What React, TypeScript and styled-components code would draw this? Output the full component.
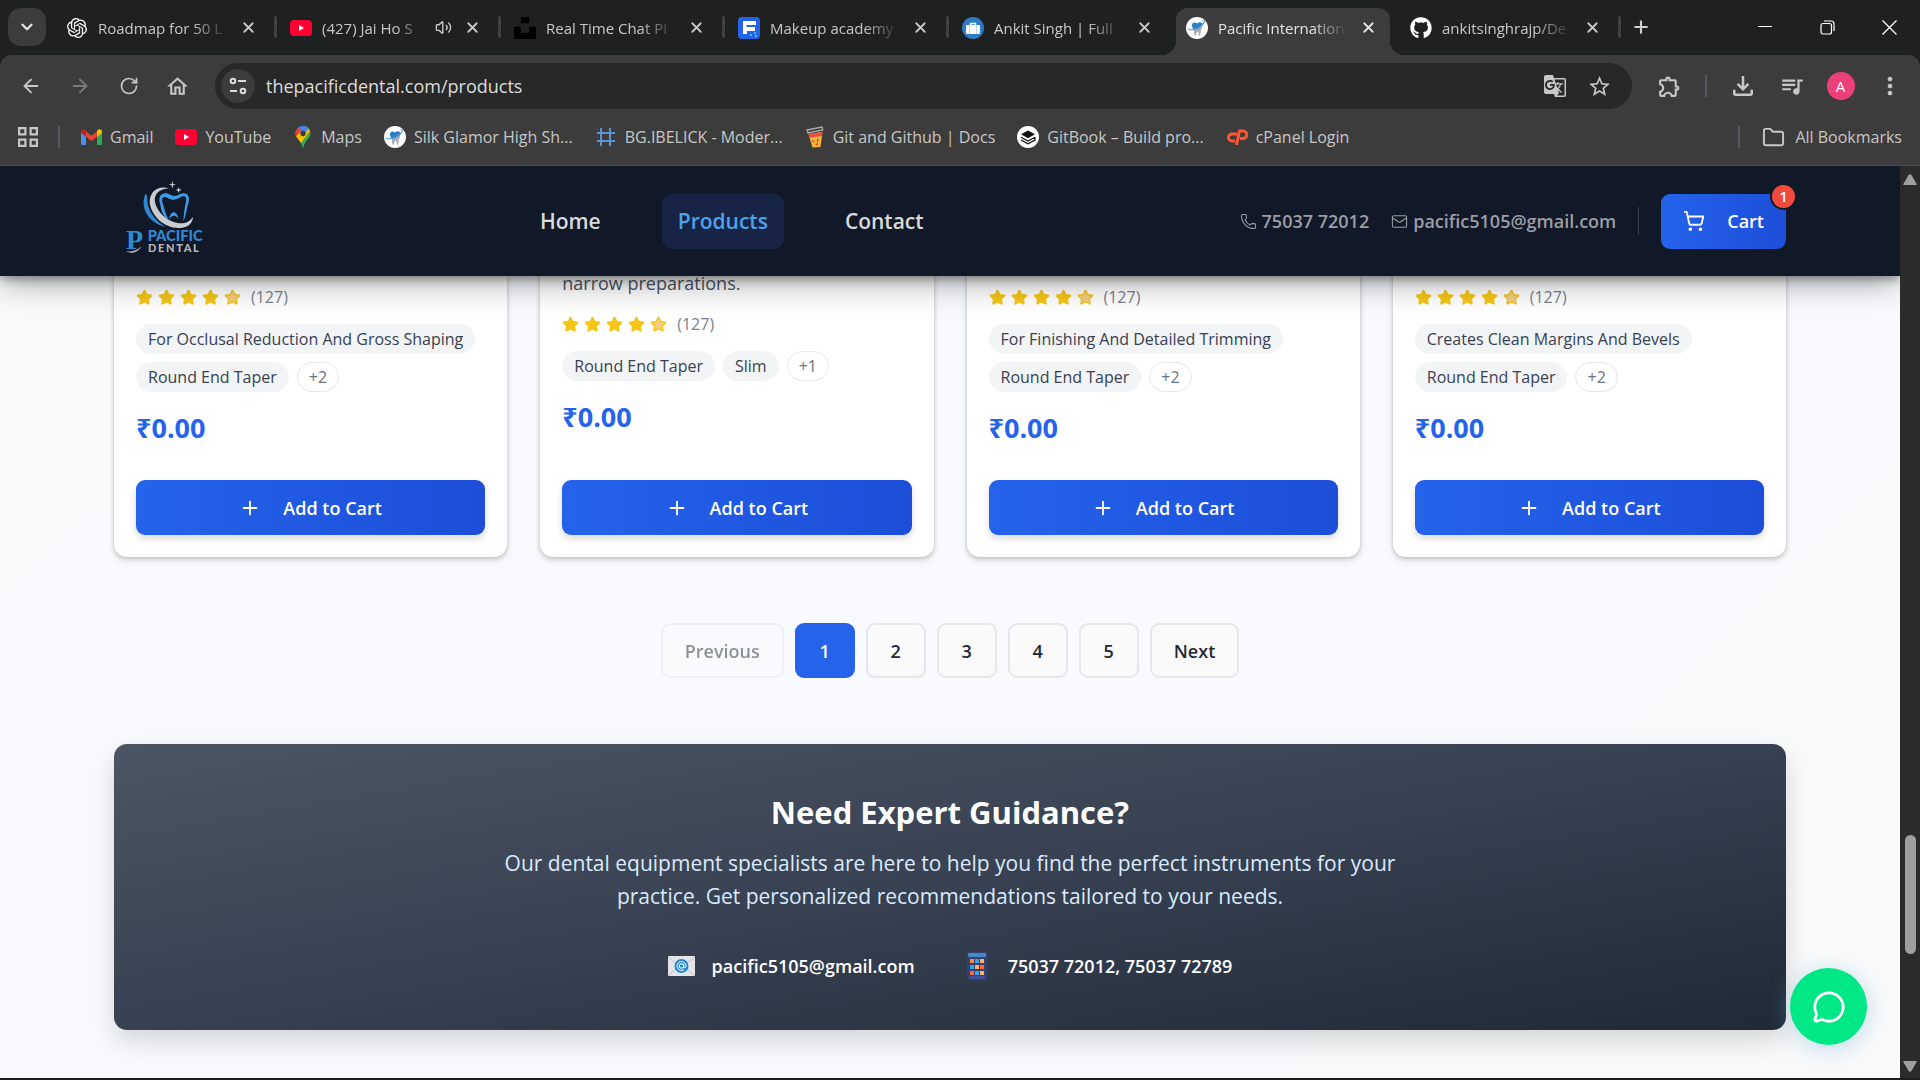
import React from "react";
import styled, { createGlobalStyle, css } from "styled-components";
import {
  ArrowLeft,
  ArrowRight,
  ChevronDown,
  Folder,
  Mail,
  MessageCircle,
  Phone,
  Plus,
  RotateCw,
  ShoppingCart,
  Star,
  Volume2,
  X,
} from "lucide-react";
import { FaGithub } from "react-icons/fa";
import { SiOpenai, SiUnsplash } from "react-icons/si";
import {
  MdGTranslate,
  MdMoreVert,
  MdOutlineExtension,
  MdOutlineFileDownload,
  MdOutlineHome,
  MdQueueMusic,
  MdStarOutline,
} from "react-icons/md";

const GlobalStyle = createGlobalStyle`
  *, *::before, *::after { box-sizing: border-box; }
  body {
    margin: 0;
    background: #1f2120;
    font-family: "Open Sans", "Noto Sans", sans-serif;
    overflow: hidden;
  }
  button, input { font: inherit; color: inherit; }
  button { border: 0; padding: 0; background: none; cursor: pointer; }
  a { color: inherit; text-decoration: none; }
  svg { display: block; flex-shrink: 0; }
`;

/* ---------- Browser frame ---------- */

const Browser = styled.div`
  height: 100vh;
  display: flex;
  flex-direction: column;
`;

const TabStrip = styled.div`
  height: 55px;
  display: flex;
  align-items: flex-start;
  padding: 8px 0 0 8px;
  background: #1f2120;
  color: #c7c7c7;
`;

const TabSearch = styled.button`
  display: grid;
  place-items: center;
  width: 38px;
  height: 38px;
  margin-right: 10px;
  border-radius: 13px;
  background: #3c3c3c;
  color: #e3e3e3;
`;

const Tab = styled.div<{ $active?: boolean }>`
  position: relative;
  flex: 0 1 214px;
  min-width: 0;
  height: 47px;
  padding: 0 12px 8px 10px;
  display: flex;
  align-items: center;
  gap: 10px;
  border-radius: 12px 12px 0 0;
  ${(p) =>
    p.$active &&
    css`
      background: #3c3c3c;
      color: #e3e3e3;
      &::before,
      &::after {
        content: "";
        position: absolute;
        bottom: 0;
        width: 14px;
        height: 14px;
      }
      &::before {
        right: 100%;
        background: radial-gradient(circle at 0 0, transparent 14px, #3c3c3c 14px);
      }
      &::after {
        left: 100%;
        background: radial-gradient(circle at 100% 0, transparent 14px, #3c3c3c 14px);
      }
    `}
`;

const TabTitle = styled.button`
  flex: 1;
  min-width: 0;
  overflow: hidden;
  white-space: nowrap;
  text-align: left;
  font-size: 15px;
  line-height: 24px;
  mask-image: linear-gradient(to right, #000 72%, transparent);
`;

const TabIcon = styled.span`
  display: grid;
  place-items: center;
  width: 22px;
  height: 22px;
`;

const CloseTab = styled.button`
  display: grid;
  place-items: center;
  width: 20px;
  height: 20px;
`;

const TabGap = styled.span<{ $line: boolean }>`
  display: flex;
  justify-content: center;
  width: 10px;
  height: 38px;
  align-items: center;
  &::before {
    content: "";
    width: 3px;
    height: 22px;
    border-radius: 2px;
    background: ${(p) => (p.$line ? "#3f4040" : "transparent")};
  }
`;

const NewTab = styled.button`
  display: grid;
  place-items: center;
  width: 34px;
  height: 38px;
  color: #d0d0d0;
`;

const WindowControls = styled.div`
  margin-left: auto;
  display: flex;
  height: 38px;
  color: #fff;
`;

const WindowButton = styled.button`
  display: grid;
  place-items: center;
  width: 62px;
`;

const Toolbar = styled.div`
  background: #3c3c3c;
  color: #c7c7c7;
  border-radius: 12px 12px 0 0;
  border-bottom: 1px solid #4a4c50;
`;

const AddressRow = styled.div`
  height: 62px;
  padding: 8px 6px;
  display: flex;
  align-items: center;
`;

const ToolButton = styled.button<{ $dim?: boolean }>`
  display: grid;
  place-items: center;
  width: 49px;
  height: 46px;
  opacity: ${(p) => (p.$dim ? 0.45 : 1)};
`;

const Omnibox = styled.div`
  flex: 1;
  height: 46px;
  margin: 0 13px 0 13px;
  padding: 0 11px 0 6px;
  display: flex;
  align-items: center;
  border-radius: 23px;
  background: #282828;
`;

const SiteInfo = styled.button`
  display: grid;
  place-items: center;
  width: 34px;
  height: 34px;
  margin-right: 11px;
  border-radius: 50%;
  background: #3c3c3c;
`;

const UrlInput = styled.input`
  flex: 1;
  min-width: 0;
  padding: 0;
  border: 0;
  outline: 0;
  background: none;
  color: #dcdcdc;
  font-size: 18px;
`;

const OmniAction = styled.button`
  display: grid;
  place-items: center;
  width: 44px;
  height: 40px;
`;

const ThinLine = styled.span<{ $spaced?: boolean }>`
  width: 2px;
  height: 22px;
  margin: 0 ${(p) => (p.$spaced ? 11 : 0)}px;
  background: #535a66;
`;

const Avatar = styled.span`
  display: grid;
  place-items: center;
  width: 28px;
  height: 28px;
  border-radius: 50%;
  background: #ec407a;
  color: #fff;
  font-size: 15px;
`;

const BookmarkRow = styled.nav`
  height: 48px;
  padding: 0 18px 8px;
  display: flex;
  align-items: center;
  font-size: 16px;
  line-height: 24px;
`;

const AppsButton = styled.button`
  margin-right: 20px;
`;

const BookmarkList = styled.div`
  display: flex;
  gap: 22px;
  margin-left: 21px;
`;

const Bookmark = styled.a`
  display: flex;
  align-items: center;
  gap: 8px;
  white-space: nowrap;
`;

const BookmarkEnd = styled.div`
  margin-left: auto;
  display: flex;
  align-items: center;
  gap: 22px;
`;

const FolderButton = styled.button`
  display: flex;
  align-items: center;
  gap: 10px;
`;

const Round = styled.span<{ $size: number; $color: string }>`
  display: grid;
  place-items: center;
  flex-shrink: 0;
  width: ${(p) => p.$size}px;
  height: ${(p) => p.$size}px;
  border-radius: 50%;
  background: ${(p) => p.$color};
`;

const Viewport = styled.div`
  flex: 1;
  min-height: 0;
  display: flex;
  border-bottom: 2px solid #1f1b1f;
`;

const Scrollbar = styled.div`
  width: 20px;
  padding: 8px 0 6px;
  display: flex;
  flex-direction: column;
  align-items: center;
  background: #2b2b2b;
`;

const ScrollTrack = styled.div`
  flex: 1;
  width: 11px;
  display: flex;
  flex-direction: column;
`;

const ScrollSpace = styled.span<{ $share: number }>`
  flex: ${(p) => p.$share};
`;

const ScrollThumb = styled.span`
  flex: 119;
  border-radius: 6px;
  background: #9f9f9f;
`;

/* ---------- Site ---------- */

const Site = styled.div`
  position: relative;
  flex: 1;
  min-width: 0;
  overflow: hidden;
  background: linear-gradient(135deg, #f8fafc, #f8faff 60%, #fafafa);
`;

const Header = styled.header`
  position: relative;
  z-index: 2;
  height: 110px;
  padding: 0 6%;
  display: flex;
  align-items: center;
  justify-content: space-between;
  background: #111827;
  box-shadow: 0 4px 33px rgba(0, 0, 0, 0.4), 0 2px 10px rgba(0, 0, 0, 0.4);
`;

const Nav = styled.nav`
  display: flex;
  gap: 45px;
`;

const NavLink = styled.a<{ $active?: boolean }>`
  padding: 0 16px;
  border-radius: 11px;
  font-size: 21px;
  font-weight: 600;
  line-height: 55px;
  color: ${(p) => (p.$active ? "#4ba3ea" : "#d9dadc")};
  background: ${(p) => (p.$active ? "#172445" : "transparent")};
`;

const HeaderSide = styled.div`
  display: flex;
  align-items: center;
  gap: 22px;
`;

const HeaderContact = styled.a`
  display: flex;
  align-items: center;
  gap: 5px;
  font-size: 18px;
  font-weight: 600;
  color: #9b9ea4;
`;

const HeaderLine = styled.span`
  width: 1px;
  height: 28px;
  background: #374151;
`;

const CartButton = styled.button`
  position: relative;
  display: flex;
  align-items: center;
  gap: 22px;
  height: 55px;
  padding: 0 22px;
  border-radius: 9px;
  background: linear-gradient(90deg, #2563eb, #1d4ed8);
  color: #fff;
  font-size: 18px;
  font-weight: 600;
`;

const CartBadge = styled.span`
  position: absolute;
  top: -11px;
  right: -11px;
  display: grid;
  place-items: center;
  width: 27px;
  height: 27px;
  border: 2px solid #111827;
  border-radius: 50%;
  background: #f04a3c;
  font-size: 15px;
`;

const Content = styled.main`
  padding: 0 6%;
`;

const CardGrid = styled.section`
  display: grid;
  grid-template-columns: repeat(4, minmax(0, 1fr));
  gap: 33px;
  margin-top: -33px;
`;

const Card = styled.article`
  display: flex;
  flex-direction: column;
  padding: 27px 22px 22px;
  height: 314px;
  border-radius: 13px;
  background: #fff;
  box-shadow: 0 4px 7px rgba(0, 0, 0, 0.1), 0 1px 4px rgba(0, 0, 0, 0.2);
`;

const Description = styled.p`
  margin: 0;
  font-size: 18px;
  line-height: 27px;
  color: #4b5563;
`;

const Rating = styled.div`
  display: flex;
  align-items: center;
  gap: 5px;
  height: 24px;
  margin: 15px 0;
`;

const ReviewCount = styled.span`
  margin-left: 5px;
  font-size: 16px;
  color: #7b828e;
`;

const Tags = styled.div`
  display: flex;
  flex-wrap: wrap;
  gap: 8px;
`;

const Tag = styled.span<{ $more?: boolean }>`
  height: 30px;
  padding: 0 11px;
  border: 1px solid ${(p) => (p.$more ? "#e5e7eb" : "#f3f4f6")};
  border-radius: 15px;
  background: ${(p) => (p.$more ? "#fff" : "#f3f4f6")};
  color: ${(p) => (p.$more ? "#6b7280" : "#374151")};
  font-size: 16px;
  font-weight: 500;
  line-height: 28px;
  white-space: nowrap;
`;

const Price = styled.strong`
  margin-top: 16px;
  color: #2563eb;
  font-size: 27px;
  font-weight: 700;
  line-height: 40px;
`;

const AddButton = styled.button`
  display: flex;
  align-items: center;
  justify-content: center;
  gap: 22px;
  height: 55px;
  margin-top: auto;
  border-radius: 9px;
  background: linear-gradient(90deg, #2563eb, #1d4ed8);
  box-shadow: 0 4px 7px rgba(0, 0, 0, 0.14);
  color: #fff;
  font-size: 18px;
  font-weight: 600;
`;

const Pagination = styled.nav`
  display: flex;
  justify-content: center;
  gap: 11px;
  margin: 66px 0;
`;

const PageButton = styled.button<{ $active?: boolean }>`
  height: 55px;
  min-width: 60px;
  padding: 0 22px;
  border: 2px solid ${(p) => (p.$active ? "#2563eb" : "#e5e7eb")};
  border-radius: 9px;
  background: ${(p) => (p.$active ? "#2563eb" : "#fafafa")};
  color: ${(p) => (p.$active ? "#fff" : "#1f2937")};
  font-size: 18px;
  font-weight: 600;
  &:disabled {
    opacity: 0.5;
  }
`;

const Guidance = styled.section`
  padding: 44px;
  border-radius: 13px;
  background: linear-gradient(to bottom right, #4b5563, #374151 50%, #1f2937);
  box-shadow: 0 11px 27px rgba(0, 0, 0, 0.15);
  text-align: center;
  color: #fff;
`;

const GuidanceTitle = styled.h2`
  margin: 0 0 11px;
  font-size: 31px;
  font-weight: 700;
  line-height: 48px;
`;

const GuidanceText = styled.p`
  max-width: 900px;
  margin: 0 auto 33px;
  font-size: 21px;
  line-height: 33px;
  color: #dbeafe;
`;

const GuidanceContacts = styled.div`
  display: flex;
  justify-content: center;
  gap: 49px;
`;

const GuidanceLink = styled.a`
  display: flex;
  align-items: center;
  gap: 17px;
  height: 40px;
  font-size: 18px;
  font-weight: 600;
`;

const EmojiBox = styled.span`
  display: grid;
  place-items: center;
  width: 27px;
`;

const ChatButton = styled.button`
  position: absolute;
  right: 33px;
  bottom: 33px;
  z-index: 3;
  display: grid;
  place-items: center;
  width: 77px;
  height: 77px;
  border-radius: 50%;
  background: #00e785;
  color: #fff;
  box-shadow: 0 4px 24px rgba(120, 180, 220, 0.45);
`;

/* ---------- Drawings ---------- */

const YoutubeIcon = () => (
  <svg width="22" height="16" viewBox="0 0 22 16">
    <rect width="22" height="16" rx="4" fill="#ff0033" />
    <path d="M9 5v6l5-3z" fill="#fff" />
  </svg>
);

const GmailIcon = () => (
  <svg width="21" height="16" viewBox="0 0 21 16">
    <path d="M0 3v11.500a1.500 1.500 0 0 0 1.500 1.500H5V6z" fill="#4a90f0" />
    <path d="M21 3v11.500a1.500 1.500 0 0 1-1.500 1.500H16V6z" fill="#34a853" />
    <path d="M5 2.500l5.500 4.200L16 2.500v5.300L10.500 12 5 7.800z" fill="#ea4335" />
    <path d="M0 2.500C0 .3 2.300-.6 4 .8l1 .9v6.100L0 4z" fill="#c5221f" />
    <path d="M21 2.500C21 .3 18.700-.6 17 .8l-1 .9v6.100L21 4z" fill="#fbbc04" />
  </svg>
);

const MapsIcon = () => (
  <svg width="20" height="22" viewBox="1 0 20 22">
    <clipPath id="pin">
      <path d="M11 0a7.500 7.500 0 0 1 7.500 7.500c0 5-5.500 6.500-6.800 13.500q-.7 1.500-1.400 0C9 14 3.500 12.500 3.500 7.500A7.500 7.500 0 0 1 11 0z" />
    </clipPath>
    <g clipPath="url(#pin)">
      <path d="M0 0h22v22H0z" fill="#34a853" />
      <path d="M0 0h16L3 15H0z" fill="#1a73e8" />
      <path d="M0 0h6l5 7-8 5z" fill="#ea4335" />
      <path d="M2 13L13.500 0H22L9 17z" fill="#fbbc04" />
      <path d="M5 0h14l-7 8z" fill="#4285f4" />
    </g>
    <circle cx="11" cy="7.500" r="2.700" fill="#3c3c3c" />
  </svg>
);

const ToothIcon = () => (
  <Round $size={22} $color="#fff">
    <svg width="20" height="20" viewBox="0 0 20 20">
      <path d="M6 8h9c0 2.500-1 3.500-1.200 5-.2 2-.5 5-1.300 5s-.8-4.500-2-4.500S9.300 18 8.300 18 7 14.500 6.800 12.500 6 9.500 6 8z" fill="#a9adb2" />
      <path d="M5 8c-.5-3.500 2.500-4.500 5-2.500C12 3.500 16 4 15.500 7.500L13 9.500l-4 2-3-.5z" fill="#2b7fc7" />
      <path d="M1 10.500c.5 2.500 9 1 13-2.500s4.500-5.500 1.500-5.500" fill="none" stroke="#4b9bd8" strokeWidth="1.200" />
    </svg>
  </Round>
);

const FramerIcon = () => (
  <svg width="22" height="22" viewBox="0 0 22 22">
    <rect width="22" height="22" rx="4" fill="#2563eb" />
    <path d="M5 4h13v4H8.500v2H17v4H9v3H5z" fill="#fff" />
    <path d="M12 17h2v2h-2zM16 15h2v2h-2zM17 18h2v2h-2z" fill="#38bdf8" />
  </svg>
);

const BagIcon = () => (
  <Round $size={22} $color="#2d7bc4">
    <svg width="14" height="14" viewBox="0 0 14 14">
      <path d="M4.500 4V2.500h5V4" fill="none" stroke="#fff" strokeWidth="1.400" />
      <rect x="0" y="4" width="14" height="9" rx="1" fill="#fff" />
      <path d="M3.500 4v9M10.500 4v9" stroke="#9cc6ea" strokeWidth=".7" />
    </svg>
  </Round>
);

const HashIcon = () => (
  <svg width="22" height="18" viewBox="0 0 22 18" stroke="#5b95d6" strokeWidth="2" fill="none">
    <path d="M6 0v18M15 0v18M2 5h18M2 13h18" />
  </svg>
);

const CupIcon = () => (
  <svg width="20" height="22" viewBox="0 0 20 22">
    <path d="M2 4l15-3 .8 3L3 7z" fill="none" stroke="#a9a9a9" strokeWidth="1.300" />
    <path d="M3.500 8l14-2-2 15-8 .5z" fill="#f6b73c" />
    <path d="M3.500 8l14-2-.5 4-12.500 1.500z" fill="#ef4b3f" />
    <path d="M7 14l3 1-2 2zM12 12l2 2-2 3zM10 18l3-1v3z" fill="#e8452f" />
  </svg>
);

const GitbookIcon = () => (
  <Round $size={22} $color="#fff">
    <svg width="18" height="18" viewBox="0 0 18 18">
      <path d="M9 2.500l7 3.800-7 3.900-7-3.900z" fill="#111" />
      <path d="M2 9.300l7 3.700 7-3.700M2 12l7 3.700 7-3.700V9" fill="none" stroke="#111" strokeWidth="1.300" />
    </svg>
  </Round>
);

const CpanelIcon = () => (
  <svg width="22" height="16" viewBox="0 0 22 16" fill="none" stroke="#ff5533" strokeWidth="3">
    <path d="M11 5H6a3.500 3.500 0 0 0 0 7h3" />
    <path d="M10.500 16L13.500 2H17a3.500 3.500 0 0 1 0 7.500h-3" />
  </svg>
);

const AppsIcon = () => (
  <svg width="20" height="20" viewBox="0 0 20 20" fill="none" stroke="#c7c7c7" strokeWidth="2.200">
    <path d="M1.100 1.100h6.300v6.300H1.100zM12.600 1.100h6.300v6.300h-6.300zM1.100 12.600h6.300v6.300H1.100zM12.600 12.600h6.300v6.300h-6.300z" />
  </svg>
);

const TuneIcon = () => (
  <svg width="18" height="18" viewBox="0 0 18 18" fill="none" stroke="#dcdcdc" strokeWidth="2">
    <circle cx="4" cy="4" r="2.300" />
    <path d="M9 4h8M1 14h7" />
    <circle cx="14" cy="14" r="2.300" />
  </svg>
);

const RestoreIcon = () => (
  <svg width="15" height="15" viewBox="0 0 15 15" fill="none" stroke="#fff" strokeWidth="1.200">
    <rect x="1" y="3.500" width="10.500" height="10.500" rx="2" />
    <path d="M4 1h7a3 3 0 0 1 3 3v7" />
  </svg>
);

const ScrollArrow = ({ down }: { down?: boolean }) => (
  <svg width="14" height="11" viewBox="0 0 14 11" fill="#9f9f9f">
    <path d={down ? "M1 0h12q1 0 .6 1L8.500 10q-1.500 1.500-3 0L.4 1Q0 0 1 0z" : "M1 11h12q1 0 .6-1L8.500 1q-1.500-1.500-3 0L.4 10Q0 11 1 11z"} />
  </svg>
);

const Logo = () => (
  <svg width="110" height="110" viewBox="12 -12 330 330" role="img" aria-label="Pacific Dental">
    <path d="M106 72C90 112 112 158 168 171 134 152 110 120 112 84 112 76 110 72 106 72z" fill="#2f86cf" />
    <path d="M177 55C142 44 114 68 120 104c8 36 42 68 84 70 28 0 44-12 45-34-10 16-26 22-46 19-34-5-62-34-68-62-4-22 10-40 42-42z" fill="#c9ccd0" />
    <path d="M177 152c-20-14-24-34-26-48-8-22 2-36 18-34 10 1 14 8 24 8 12 0 18-8 28-8 14 0 20 14 13 34-4 12-5 30-14 50 2-22 3-34 6-50 4-14 4-24-4-25-10-1-16 10-32 10-14 0-20-10-28-8-8 3-6 14-2 24 5 16 7 30 17 47z" fill="#3f9ae6" />
    <path d="M178 148c2-28 24-28 27 0-6-14-20-14-27 0z" fill="#3f9ae6" />
    <path d="M187 32l2 10 9 2-9 2-2 10-2-10-9-2 9-2zM206 51l2 7 7 2-7 2-2 7-2-7-7-2 7-2z" fill="#d5d8db" />
    <path d="M48 243c16 4 34-2 46-14-8 18-28 26-46 14z" fill="#a8abb0" />
    <text x="48" y="236" fill="#3189d3" fontFamily="Liberation Serif, serif" fontWeight="700" fontSize="84">P</text>
    <text x="113" y="213" fill="#3189d3" fontFamily="Lato, sans-serif" fontWeight="900" fontSize="44">PACIFIC</text>
    <text x="114" y="246" fill="#b4b6b9" fontFamily="Lato, sans-serif" fontWeight="900" fontSize="33" letterSpacing="5">DENTAL</text>
  </svg>
);

const EmailEmoji = () => (
  <svg width="27" height="20" viewBox="0 0 27 20">
    <rect width="27" height="20" rx="1" fill="#e3e5e8" />
    <path d="M0 20l10-9M27 20l-10-9M0 1l10 8M27 1l-10 8" stroke="#bfc3c8" />
    <circle cx="13.500" cy="10" r="7" fill="#2587d0" />
    <circle cx="13.500" cy="10" r="2.200" fill="none" stroke="#fff" strokeWidth="1.100" />
    <path d="M15.700 8v2.700c0 1.500 2.300 1.300 2.300-.7a4.500 4.500 0 1 0-2 3.700" fill="none" stroke="#fff" strokeWidth="1" />
  </svg>
);

const PhoneEmoji = () => {
  const keys = ["#ff8a3c", "#3aa0f0", "#f7b267", "#3aa0f0", "#f7b267", "#ff6a3c", "#ff6a3c", "#3aa0f0", "#f7b267"];
  return (
    <svg width="20" height="28" viewBox="0 0 20 28">
      <rect width="20" height="28" rx="2" fill="#33416e" />
      <rect x="1" y="1" width="18" height="4" rx="1" fill="#4a87c4" />
      {keys.map((k, i) => (
        <rect key={i} x={3 + (i % 3) * 5} y={7 + Math.floor(i / 3) * 6} width="4" height="4" fill={k} />
      ))}
      <rect x="2" y="24" width="16" height="3" fill="#3f4fa0" />
    </svg>
  );
};

const StarRow = () => (
  <>
    {[0, 1, 2, 3, 4].map((i) => (
      <Star key={i} size={17} color="#f5c518" fill={i < 4 ? "#f5c518" : "#f3cd86"} strokeWidth={2} />
    ))}
  </>
);

/* ---------- Data ---------- */

const tabs = [
  { title: "Roadmap for 50 L", icon: <SiOpenai size={20} color="#fff" />, line: true },
  { title: "(427) Jai Ho S", icon: <YoutubeIcon />, line: true, audio: true },
  { title: "Real Time Chat Pi", icon: <SiUnsplash size={22} color="#000" />, line: true },
  { title: "Makeup academy", icon: <FramerIcon />, line: true },
  { title: "Ankit Singh | Full", icon: <BagIcon />, line: false },
  { title: "Pacific Internation", icon: <ToothIcon />, line: false, active: true },
  { title: "ankitsinghrajp/De", icon: <FaGithub size={22} color="#fff" />, line: true },
];

const bookmarks = [
  { label: "Gmail", icon: <GmailIcon /> },
  { label: "YouTube", icon: <YoutubeIcon /> },
  { label: "Maps", icon: <MapsIcon /> },
  { label: "Silk Glamor High Sh...", icon: <ToothIcon /> },
  { label: "BG.IBELICK - Moder...", icon: <HashIcon /> },
  { label: "Git and Github | Docs", icon: <CupIcon /> },
  { label: "GitBook – Build pro...", icon: <GitbookIcon /> },
  { label: "cPanel Login", icon: <CpanelIcon /> },
];

const products = [
  { tags: ["For Occlusal Reduction And Gross Shaping", "Round End Taper"], more: "+2" },
  { description: "narrow preparations.", tags: ["Round End Taper", "Slim"], more: "+1" },
  { tags: ["For Finishing And Detailed Trimming", "Round End Taper"], more: "+2" },
  { tags: ["Creates Clean Margins And Bevels", "Round End Taper"], more: "+2" },
];

export default function App() {
  return (
    <Browser>
      <GlobalStyle />
      <TabStrip>
        <TabSearch aria-label="Search tabs">
          <ChevronDown size={18} strokeWidth={3} />
        </TabSearch>
        {tabs.map((t) => (
          <React.Fragment key={t.title}>
            <Tab $active={t.active}>
              <TabIcon>{t.icon}</TabIcon>
              <TabTitle>{t.title}</TabTitle>
              {t.audio && <Volume2 size={17} />}
              <CloseTab aria-label="Close tab">
                <X size={17} strokeWidth={2.5} />
              </CloseTab>
            </Tab>
            <TabGap $line={t.line} />
          </React.Fragment>
        ))}
        <NewTab aria-label="New tab">
          <Plus size={20} strokeWidth={2.5} />
        </NewTab>
        <WindowControls>
          <WindowButton aria-label="Minimize">
            <svg width="14" height="14" viewBox="0 0 14 14" stroke="#fff">
              <path d="M0 6.500h14" />
            </svg>
          </WindowButton>
          <WindowButton aria-label="Restore">
            <RestoreIcon />
          </WindowButton>
          <WindowButton aria-label="Close">
            <svg width="15" height="15" viewBox="0 0 15 15" stroke="#fff" strokeWidth="1.300">
              <path d="M.5.5l14 14M14.500.5l-14 14" />
            </svg>
          </WindowButton>
        </WindowControls>
      </TabStrip>

      <Toolbar>
        <AddressRow>
          <ToolButton aria-label="Back">
            <ArrowLeft size={22} />
          </ToolButton>
          <ToolButton aria-label="Forward" $dim>
            <ArrowRight size={22} />
          </ToolButton>
          <ToolButton aria-label="Reload">
            <RotateCw size={20} />
          </ToolButton>
          <ToolButton aria-label="Home">
            <MdOutlineHome size={25} />
          </ToolButton>
          <Omnibox>
            <SiteInfo aria-label="Site information">
              <TuneIcon />
            </SiteInfo>
            <UrlInput aria-label="Address" defaultValue="thepacificdental.com/products" />
            <OmniAction aria-label="Translate">
              <MdGTranslate size={24} />
            </OmniAction>
            <OmniAction aria-label="Bookmark this page">
              <MdStarOutline size={25} />
            </OmniAction>
          </Omnibox>
          <ToolButton aria-label="Extensions">
            <MdOutlineExtension size={25} />
          </ToolButton>
          <ThinLine $spaced />
          <ToolButton aria-label="Downloads">
            <MdOutlineFileDownload size={30} />
          </ToolButton>
          <ToolButton aria-label="Media">
            <MdQueueMusic size={26} />
          </ToolButton>
          <ToolButton aria-label="Profile">
            <Avatar>A</Avatar>
          </ToolButton>
          <ToolButton aria-label="Menu">
            <MdMoreVert size={28} />
          </ToolButton>
        </AddressRow>
        <BookmarkRow>
          <AppsButton aria-label="Apps">
            <AppsIcon />
          </AppsButton>
          <ThinLine />
          <BookmarkList>
            {bookmarks.map((b) => (
              <Bookmark key={b.label} href="#">
                {b.icon}
                {b.label}
              </Bookmark>
            ))}
          </BookmarkList>
          <BookmarkEnd>
            <ThinLine />
            <FolderButton>
              <Folder size={23} />
              All Bookmarks
            </FolderButton>
          </BookmarkEnd>
        </BookmarkRow>
      </Toolbar>

      <Viewport>
        <Site>
          <Header>
            <a href="#">
              <Logo />
            </a>
            <Nav>
              <NavLink href="#">Home</NavLink>
              <NavLink href="#" $active>
                Products
              </NavLink>
              <NavLink href="#">Contact</NavLink>
            </Nav>
            <HeaderSide>
              <HeaderContact href="#">
                <Phone size={17} strokeWidth={1.5} />
                75037 72012
              </HeaderContact>
              <HeaderContact href="#">
                <Mail size={17} strokeWidth={1.5} />
                pacific5105@gmail.com
              </HeaderContact>
              <HeaderLine />
              <CartButton>
                <ShoppingCart size={22} strokeWidth={2} />
                Cart
                <CartBadge>1</CartBadge>
              </CartButton>
            </HeaderSide>
          </Header>

          <Content>
            <CardGrid>
              {products.map((p) => (
                <Card key={p.tags[0]}>
                  {p.description && <Description>{p.description}</Description>}
                  <Rating>
                    <StarRow />
                    <ReviewCount>(127)</ReviewCount>
                  </Rating>
                  <Tags>
                    {p.tags.map((t) => (
                      <Tag key={t}>{t}</Tag>
                    ))}
                    <Tag $more>{p.more}</Tag>
                  </Tags>
                  <Price>₹0.00</Price>
                  <AddButton>
                    <Plus size={22} strokeWidth={2} />
                    Add to Cart
                  </AddButton>
                </Card>
              ))}
            </CardGrid>

            <Pagination>
              <PageButton disabled>Previous</PageButton>
              <PageButton $active>1</PageButton>
              <PageButton>2</PageButton>
              <PageButton>3</PageButton>
              <PageButton>4</PageButton>
              <PageButton>5</PageButton>
              <PageButton>Next</PageButton>
            </Pagination>

            <Guidance>
              <GuidanceTitle>Need Expert Guidance?</GuidanceTitle>
              <GuidanceText>
                Our dental equipment specialists are here to help you find the perfect instruments for your practice.
                Get personalized recommendations tailored to your needs.
              </GuidanceText>
              <GuidanceContacts>
                <GuidanceLink href="#">
                  <EmojiBox>
                    <EmailEmoji />
                  </EmojiBox>
                  pacific5105@gmail.com
                </GuidanceLink>
                <GuidanceLink href="#">
                  <EmojiBox>
                    <PhoneEmoji />
                  </EmojiBox>
                  75037 72012, 75037 72789
                </GuidanceLink>
              </GuidanceContacts>
            </Guidance>
          </Content>

          <ChatButton aria-label="Chat">
            <MessageCircle size={34} strokeWidth={2} />
          </ChatButton>
        </Site>
        <Scrollbar>
          <ScrollArrow />
          <ScrollTrack>
            <ScrollSpace $share={650} />
            <ScrollThumb />
            <ScrollSpace $share={107} />
          </ScrollTrack>
          <ScrollArrow down />
        </Scrollbar>
      </Viewport>
    </Browser>
  );
}
